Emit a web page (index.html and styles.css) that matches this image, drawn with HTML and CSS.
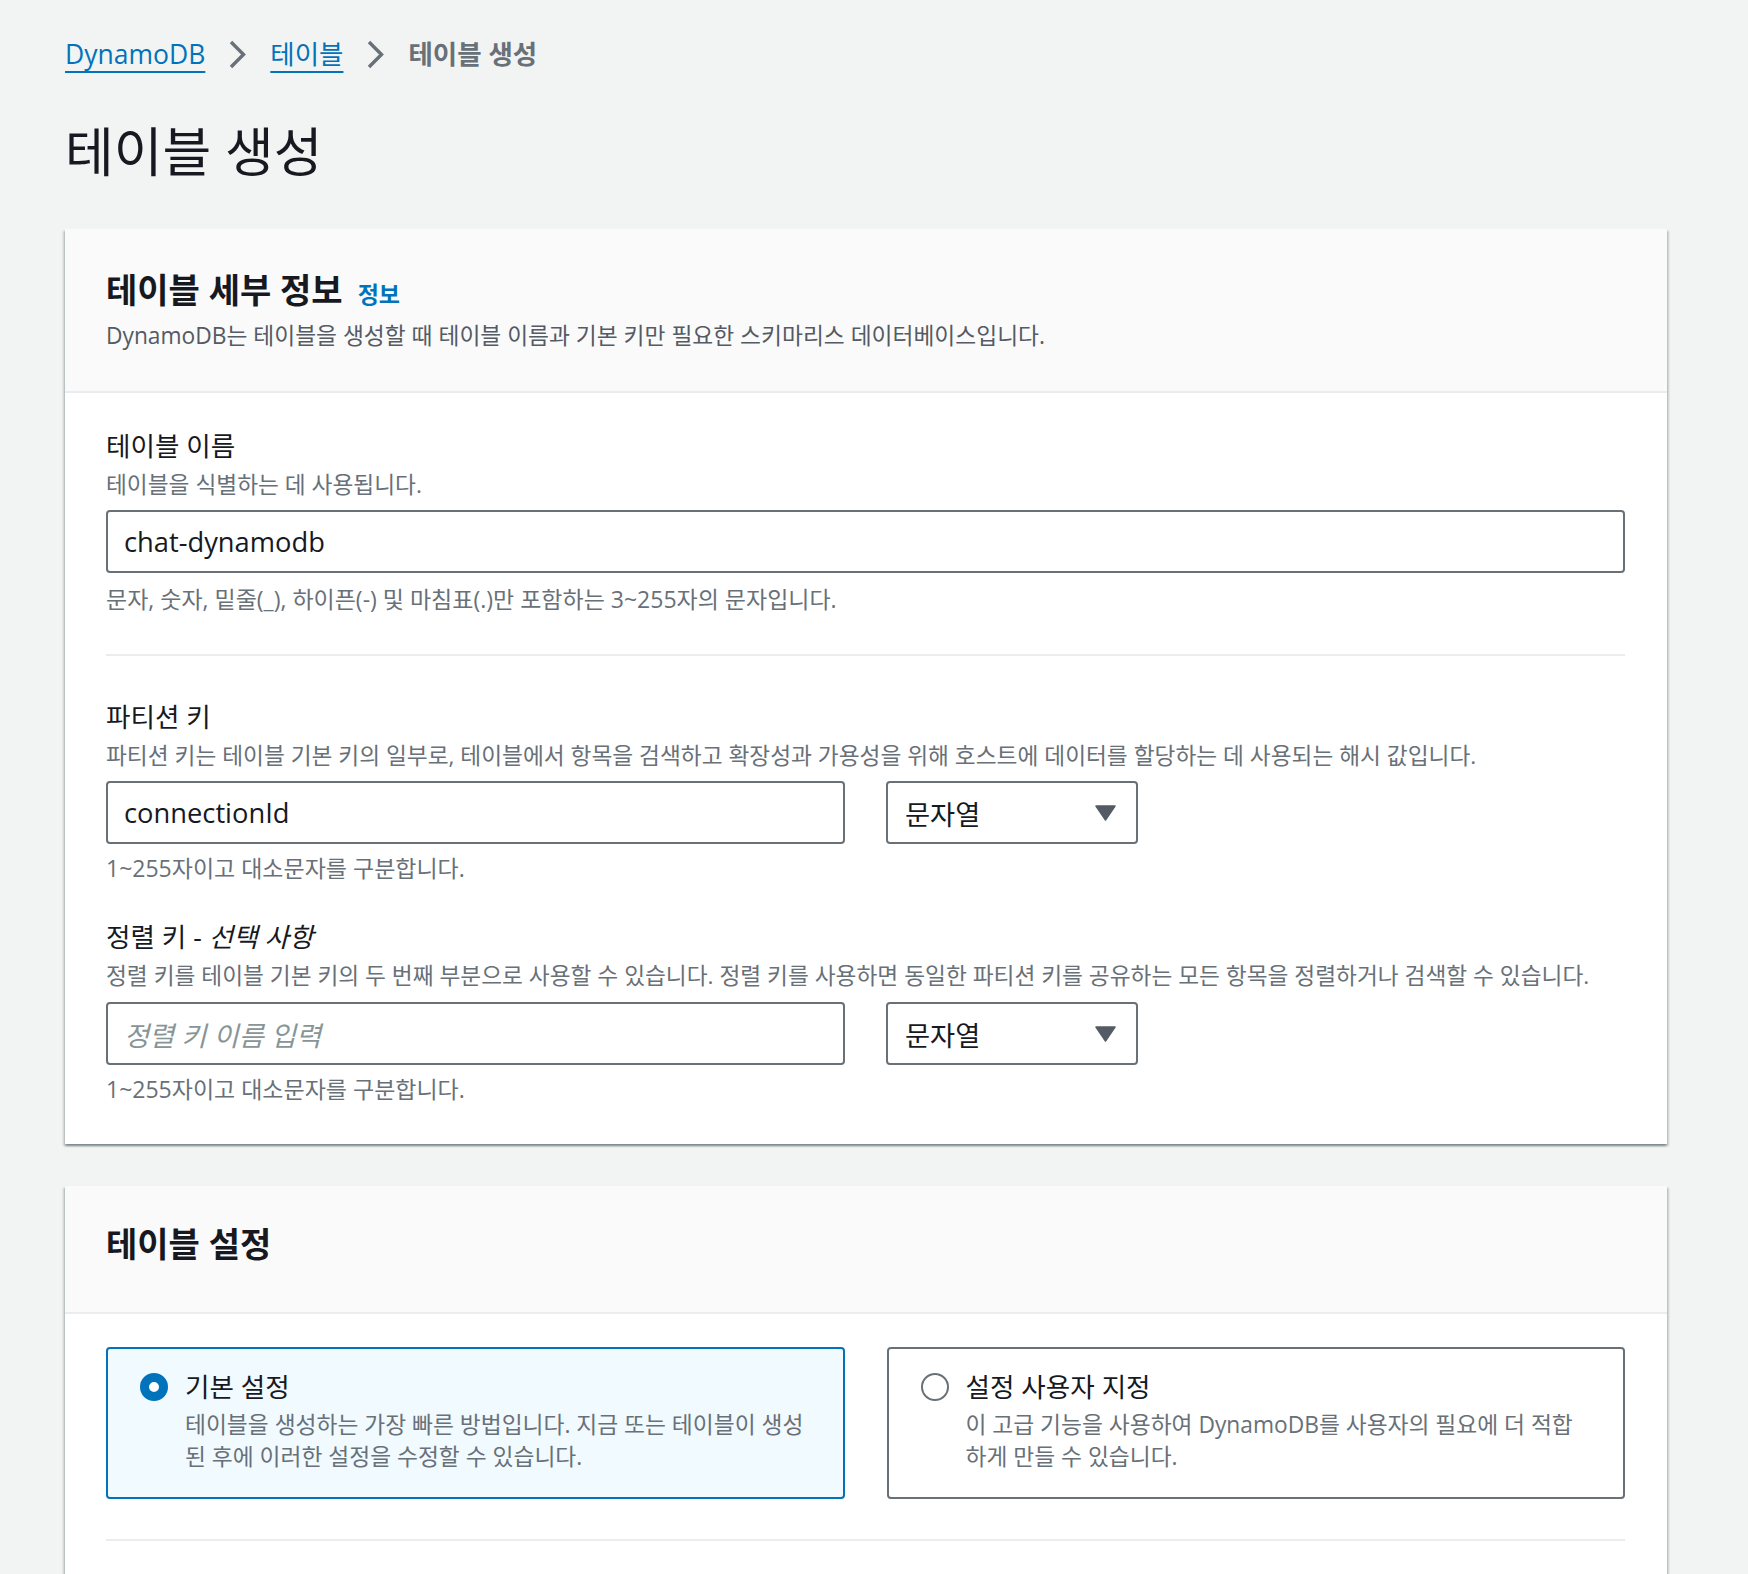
FILE: index.html
```html
<!DOCTYPE html>
<html lang="ko">
<head>
<meta charset="utf-8">
<title>테이블 생성</title>
<link rel="stylesheet" href="styles.css">
</head>
<body>
<div class="page">
  <nav class="breadcrumbs">
    <a class="crumb-link" href="#">DynamoDB</a>
    <svg class="chevron" width="17" height="29" viewBox="0 0 17 29"><path d="M2 2 L14.5 14.5 L2 27" fill="none" stroke="#687078" stroke-width="3.4"/></svg>
    <a class="crumb-link" href="#">테이블</a>
    <svg class="chevron" width="17" height="29" viewBox="0 0 17 29"><path d="M2 2 L14.5 14.5 L2 27" fill="none" stroke="#687078" stroke-width="3.4"/></svg>
    <span class="crumb-current">테이블 생성</span>
  </nav>

  <h1 class="page-title">테이블 생성</h1>

  <section class="card">
    <header class="card-header">
      <h2 class="card-title">테이블 세부 정보<a class="info-link" href="#">정보</a></h2>
      <p class="card-desc">DynamoDB는 테이블을 생성할 때 테이블 이름과 기본 키만 필요한 스키마리스 데이터베이스입니다.</p>
    </header>
    <div class="card-body">
      <div class="field">
        <div class="field-label">테이블 이름</div>
        <div class="field-desc">테이블을 식별하는 데 사용됩니다.</div>
        <div class="input-row">
          <div class="input input-full">chat-dynamodb</div>
        </div>
        <div class="field-hint">문자, 숫자, 밑줄(_), 하이픈(-) 및 마침표(.)만 포함하는 3~255자의 문자입니다.</div>
      </div>

      <hr class="divider">

      <div class="field field-partition">
        <div class="field-label">파티션 키</div>
        <div class="field-desc">파티션 키는 테이블 기본 키의 일부로, 테이블에서 항목을 검색하고 확장성과 가용성을 위해 호스트에 데이터를 할당하는 데 사용되는 해시 값입니다.</div>
        <div class="input-row">
          <div class="input input-key">connectionId</div>
          <div class="input select">
            <span>문자열</span>
            <svg class="caret" width="21" height="16" viewBox="0 0 21 16"><path d="M1 1 H20 L10.5 15 Z" fill="#545b64" stroke="#545b64" stroke-width="1.5" stroke-linejoin="round"/></svg>
          </div>
        </div>
        <div class="field-hint">1~255자이고 대소문자를 구분합니다.</div>
      </div>

      <div class="field field-sort">
        <div class="field-label">정렬 키 - <i>선택 사항</i></div>
        <div class="field-desc">정렬 키를 테이블 기본 키의 두 번째 부분으로 사용할 수 있습니다. 정렬 키를 사용하면 동일한 파티션 키를 공유하는 모든 항목을 정렬하거나 검색할 수 있습니다.</div>
        <div class="input-row">
          <div class="input input-key placeholder">정렬 키 이름 입력</div>
          <div class="input select">
            <span>문자열</span>
            <svg class="caret" width="21" height="16" viewBox="0 0 21 16"><path d="M1 1 H20 L10.5 15 Z" fill="#545b64" stroke="#545b64" stroke-width="1.5" stroke-linejoin="round"/></svg>
          </div>
        </div>
        <div class="field-hint">1~255자이고 대소문자를 구분합니다.</div>
      </div>
    </div>
  </section>

  <section class="card card-settings">
    <header class="card-header card-header-plain">
      <h2 class="card-title">테이블 설정</h2>
    </header>
    <div class="card-body card-body-settings">
      <div class="tiles">
        <div class="tile tile-selected">
          <span class="radio radio-on"></span>
          <div class="tile-text">
            <div class="tile-title">기본 설정</div>
            <div class="tile-desc">테이블을 생성하는 가장 빠른 방법입니다. 지금 또는 테이블이 생성<br>된 후에 이러한 설정을 수정할 수 있습니다.</div>
          </div>
        </div>
        <div class="tile">
          <span class="radio"></span>
          <div class="tile-text">
            <div class="tile-title">설정 사용자 지정</div>
            <div class="tile-desc">이 고급 기능을 사용하여 DynamoDB를 사용자의 필요에 더 적합<br>하게 만들 수 있습니다.</div>
          </div>
        </div>
      </div>
      <hr class="divider divider-tiles">
    </div>
  </section>
</div>
</body>
</html>
```

FILE: styles.css
```css
* {
  box-sizing: border-box;
}

body {
  margin: 0;
  background: #f2f3f3;
  color: #16191f;
  font-family: "Open Sans", "Noto Sans CJK KR", sans-serif;
}

.page {
  padding: 36px 81px 0 65px;
}

/* Breadcrumbs */
.breadcrumbs {
  display: flex;
  align-items: center;
  gap: 24px;
  height: 36px;
  font-size: 26.5px;
  line-height: 36px;
}

.crumb-link {
  color: #0073bb;
  text-decoration: underline;
  text-decoration-thickness: 2px;
  text-underline-offset: 7px;
}

.crumb-current {
  color: #687078;
  font-weight: 700;
}

.chevron {
  flex: none;
  display: block;
}

/* Title */
.page-title {
  margin: 46px 0 0;
  font-size: 53px;
  font-weight: 400;
  line-height: 68px;
}

/* Cards */
.card {
  margin-top: 43px;
  background: #fff;
  box-shadow: 0 2px 2px 0 rgba(0, 28, 36, 0.3), 2px 2px 2px 0 rgba(0, 28, 36, 0.15), -2px 2px 2px 0 rgba(0, 28, 36, 0.15);
}

.card-settings {
  margin-top: 42px;
}

.card-header {
  background: #fafafa;
  border-bottom: 2px solid #eaeded;
  padding: 41px 42px 40px 41px;
}

.card-header-plain {
  padding: 38px 42px 48px 41px;
}

.card-title {
  margin: 0;
  font-size: 34px;
  font-weight: 700;
  line-height: 40px;
}

.info-link {
  margin-left: 15px;
  font-size: 23px;
  font-weight: 700;
  color: #0073bb;
  text-decoration: none;
}

.card-desc {
  margin: 7px 0 0;
  font-size: 22.75px;
  line-height: 30px;
  color: #545b64;
}

.card-body {
  padding: 36px 42px 40px 41px;
}

/* Fields */
.field-label {
  font-size: 26.6px;
  line-height: 34px;
}

.field-desc {
  margin-top: 7px;
  font-size: 22.7px;
  line-height: 30px;
  color: #687078;
  white-space: nowrap;
}

.input-row {
  display: flex;
  gap: 41px;
  margin-top: 10px;
}

.input {
  display: flex;
  align-items: center;
  height: 63px;
  padding: 0 16px;
  border: 2px solid #687078;
  border-radius: 4px;
  background: #fff;
  font-size: 27.3px;
  color: #16191f;
}

.input-full {
  flex: 1;
}

.input-key {
  width: 739px;
}

.placeholder {
  color: #879596;
  font-style: italic;
}

.select {
  width: 252px;
  justify-content: space-between;
  padding: 0 20px 0 17px;
}

.caret {
  display: block;
}

.field-hint {
  margin-top: 11px;
  font-size: 23px;
  line-height: 30px;
  color: #687078;
}

.divider {
  margin: 40px 0 0;
  border: 0;
  border-top: 2px solid #eaeded;
}

.field-partition {
  margin-top: 44px;
}

.field-partition .field-hint {
  margin-top: 9px;
}

.field-sort {
  margin-top: 37px;
}

.field-sort .input-row {
  margin-top: 11px;
}

.field-sort .field-hint {
  margin-top: 9px;
}

/* Settings tiles */
.card-body-settings {
  padding: 33px 42px 40px 41px;
}

.tiles {
  display: grid;
  grid-template-columns: 1fr 1fr;
  gap: 42px;
}

.tile {
  display: flex;
  align-items: flex-start;
  gap: 17px;
  padding: 21px 30px 24px 32px;
  border: 2px solid #687078;
  border-radius: 4px;
  background: #fff;
}

.tile-selected {
  border-color: #0073bb;
  background: #f1faff;
}

.radio {
  flex: none;
  width: 28px;
  height: 28px;
  margin-top: 3px;
  border: 2px solid #687078;
  border-radius: 50%;
  background: #fff;
}

.radio-on {
  border: 9px solid #0073bb;
}

.tile-title {
  font-size: 26.6px;
  line-height: 34px;
}

.tile-desc {
  margin-top: 5px;
  font-size: 22.75px;
  line-height: 32px;
  color: #687078;
  white-space: nowrap;
}

.divider-tiles {
  margin-top: 40px;
}
```
